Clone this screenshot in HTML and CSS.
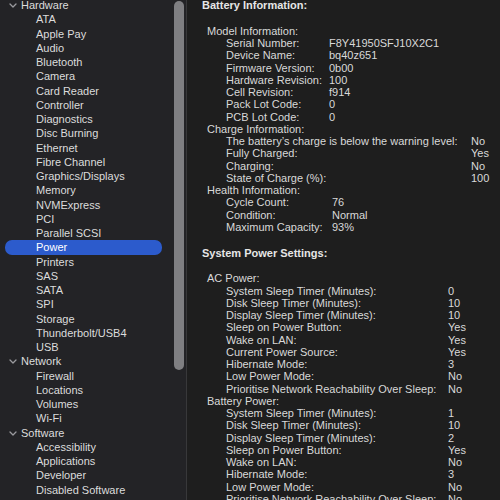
FILE: index.html
```html
<!DOCTYPE html>
<html>
<head>
<meta charset="utf-8">
<link rel="stylesheet" href="styles.css">
</head>
<body>
<div class="window">
  <nav class="sidebar">
    <ul class="tree">
      <li class="group"><svg class="chev" viewBox="0 0 8 5" width="8" height="5"><path d="M1 1 L4 4 L7 1" fill="none" stroke="#9a9a9e" stroke-width="1.3" stroke-linecap="round" stroke-linejoin="round"/></svg>Hardware</li>
      <li class="item">ATA</li>
      <li class="item">Apple Pay</li>
      <li class="item">Audio</li>
      <li class="item">Bluetooth</li>
      <li class="item">Camera</li>
      <li class="item">Card Reader</li>
      <li class="item">Controller</li>
      <li class="item">Diagnostics</li>
      <li class="item">Disc Burning</li>
      <li class="item">Ethernet</li>
      <li class="item">Fibre Channel</li>
      <li class="item">Graphics/Displays</li>
      <li class="item">Memory</li>
      <li class="item">NVMExpress</li>
      <li class="item">PCI</li>
      <li class="item">Parallel SCSI</li>
      <li class="item selected">Power</li>
      <li class="item">Printers</li>
      <li class="item">SAS</li>
      <li class="item">SATA</li>
      <li class="item">SPI</li>
      <li class="item">Storage</li>
      <li class="item">Thunderbolt/USB4</li>
      <li class="item">USB</li>
      <li class="group"><svg class="chev" viewBox="0 0 8 5" width="8" height="5"><path d="M1 1 L4 4 L7 1" fill="none" stroke="#9a9a9e" stroke-width="1.3" stroke-linecap="round" stroke-linejoin="round"/></svg>Network</li>
      <li class="item">Firewall</li>
      <li class="item">Locations</li>
      <li class="item">Volumes</li>
      <li class="item">Wi-Fi</li>
      <li class="group"><svg class="chev" viewBox="0 0 8 5" width="8" height="5"><path d="M1 1 L4 4 L7 1" fill="none" stroke="#9a9a9e" stroke-width="1.3" stroke-linecap="round" stroke-linejoin="round"/></svg>Software</li>
      <li class="item">Accessibility</li>
      <li class="item">Applications</li>
      <li class="item">Developer</li>
      <li class="item">Disabled Software</li>
    </ul>
  </nav>
  <div class="scrolltrack"><div class="thumb"></div></div>
  <div class="divider"></div>
  <main class="pane">
    <div class="heading">Battery Information:</div>
    <div class="spacer"></div>
    <div class="sub">Model Information:</div>
    <div class="kv model">
      <span>Serial Number:</span><span>F8Y41950SFJ10X2C1</span>
      <span>Device Name:</span><span>bq40z651</span>
      <span>Firmware Version:</span><span>0b00</span>
      <span>Hardware Revision:</span><span>100</span>
      <span>Cell Revision:</span><span>f914</span>
      <span>Pack Lot Code:</span><span>0</span>
      <span>PCB Lot Code:</span><span>0</span>
    </div>
    <div class="sub">Charge Information:</div>
    <div class="kv charge">
      <span>The battery’s charge is below the warning level:</span><span>No</span>
      <span>Fully Charged:</span><span>Yes</span>
      <span>Charging:</span><span>No</span>
      <span>State of Charge (%):</span><span>100</span>
    </div>
    <div class="sub">Health Information:</div>
    <div class="kv health">
      <span>Cycle Count:</span><span>76</span>
      <span>Condition:</span><span>Normal</span>
      <span>Maximum Capacity:</span><span>93%</span>
    </div>
    <div class="spacer"></div>
    <div class="heading">System Power Settings:</div>
    <div class="spacer"></div>
    <div class="sub">AC Power:</div>
    <div class="kv power">
      <span>System Sleep Timer (Minutes):</span><span>0</span>
      <span>Disk Sleep Timer (Minutes):</span><span>10</span>
      <span>Display Sleep Timer (Minutes):</span><span>10</span>
      <span>Sleep on Power Button:</span><span>Yes</span>
      <span>Wake on LAN:</span><span>Yes</span>
      <span>Current Power Source:</span><span>Yes</span>
      <span>Hibernate Mode:</span><span>3</span>
      <span>Low Power Mode:</span><span>No</span>
      <span>Prioritise Network Reachability Over Sleep:</span><span>No</span>
    </div>
    <div class="sub">Battery Power:</div>
    <div class="kv power">
      <span>System Sleep Timer (Minutes):</span><span>1</span>
      <span>Disk Sleep Timer (Minutes):</span><span>10</span>
      <span>Display Sleep Timer (Minutes):</span><span>2</span>
      <span>Sleep on Power Button:</span><span>Yes</span>
      <span>Wake on LAN:</span><span>No</span>
      <span>Hibernate Mode:</span><span>3</span>
      <span>Low Power Mode:</span><span>No</span>
      <span>Prioritise Network Reachability Over Sleep:</span><span>No</span>
    </div>
  </main>
</div>
</body>
</html>
```

FILE: styles.css
```css
* { box-sizing: border-box; }
html, body {
  margin: 0;
  padding: 0;
  width: 500px;
  height: 500px;
  overflow: hidden;
  background: #1e1e1e;
}
.window {
  display: grid;
  grid-template-columns: 172px 14px 1px 1fr;
  height: 500px;
  font-family: "Liberation Sans", Arial, sans-serif;
  font-size: 11px;
  color: #dcdcdc;
}
.sidebar {
  background: #232326;
  overflow: hidden;
}
.tree {
  list-style: none;
  margin: -2px 0 0 0;
  padding: 0;
}
.tree li {
  height: 14.26px;
  line-height: 14.26px;
  white-space: nowrap;
}
.group {
  display: flex;
  align-items: center;
  padding-left: 9px;
}
.chev {
  margin-right: 4px;
  margin-top: 1px;
}
.item {
  padding-left: 31px;
  margin-left: 5px;
  margin-right: 10px;
}
.selected {
  background: #2c5bcc;
  border-radius: 7px;
  color: #ffffff;
}
.scrolltrack {
  background: #232326;
  padding: 1px 2px 0 2px;
}
.thumb {
  width: 10px;
  height: 369px;
  background: #7f7f82;
  border-radius: 5px;
}
.divider {
  background: #38383a;
}
.pane {
  padding: 0 0 0 15px;
  margin-top: -1px;
  overflow: hidden;
  line-height: 12.25px;
  white-space: nowrap;
  color: #d9d9d9;
}
.heading {
  height: 12.25px;
  font-weight: 700;
  color: #e6e6e6;
}
.spacer {
  height: 13.5px;
}
.sub {
  height: 12.25px;
  padding-left: 5px;
}
.kv {
  display: grid;
  padding-left: 24px;
  grid-auto-rows: 12.25px;
}
.kv.model { grid-template-columns: 103px auto; }
.kv.charge { grid-template-columns: 245px auto; }
.kv.health { grid-template-columns: 106px auto; }
.kv.power { grid-template-columns: 222px auto; }
```
